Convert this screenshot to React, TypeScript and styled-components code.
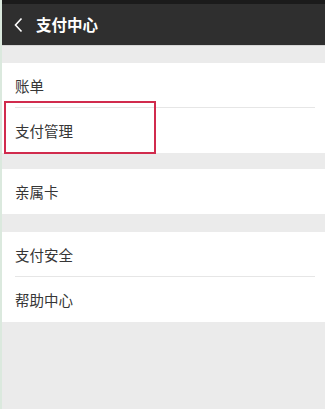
import React from "react";
import styled, { createGlobalStyle } from "styled-components";

const Global = createGlobalStyle`
  html, body { margin: 0; padding: 0; background: #ebebeb; }
  body { font-family: "Noto Sans CJK SC", "Noto Sans", sans-serif; }
`;

const Page = styled.div`
  width: 325px;
  height: 409px;
  background: #ebebeb;
  border-left: 2px solid #dbe9de;
  box-sizing: border-box;
  overflow: hidden;
  display: flex;
  flex-direction: column;
`;

const StatusStrip = styled.div`
  height: 4px;
  background: #1b1b1b;
  margin-left: -2px;
`;

const Header = styled.div`
  height: 42px;
  background: #2f2f2f;
  margin-left: -2px;
  display: flex;
  align-items: center;
  padding-left: 13px;
  gap: 12px;
  border-bottom: 1px solid #d6d6d6;
  box-sizing: border-box;
`;

const Title = styled.div`
  color: #ffffff;
  font-size: 15.5px;
  font-weight: 700;
  line-height: 1;
`;

const Group = styled.div<{ $top: number }>`
  margin-top: ${(p) => p.$top}px;
  background: #ffffff;
  display: flex;
  flex-direction: column;
`;

const Row = styled.div<{ $h?: number }>`
  position: relative;
  height: ${(p) => p.$h ?? 44}px;
  display: flex;
  align-items: center;
  padding-left: 13px;
  font-size: 14.5px;
  color: #363636;
`;

const Divider = styled.div`
  height: 1px;
  background: #e6e6e6;
  margin: 0 10px 0 13px;
`;

const Highlight = styled.div`
  position: absolute;
  left: 2px;
  top: -7px;
  width: 152px;
  height: 53px;
  border: 2.5px solid #d12b4d;
  box-sizing: border-box;
  pointer-events: none;
`;

export default function App() {
  return (
    <>
      <Global />
      <Page>
        <StatusStrip />
        <Header>
          <svg width="11" height="16" viewBox="0 0 11 16">
            <path d="M8.5 1.5 L2.5 8 L8.5 14.5" fill="none" stroke="#ffffff" strokeWidth="1.6" />
          </svg>
          <Title>支付中心</Title>
        </Header>
        <Group $top={17}>
          <Row>账单</Row>
          <Divider />
          <Row $h={45}>
            支付管理
            <Highlight />
          </Row>
        </Group>
        <Group $top={16}>
          <Row $h={45}>亲属卡</Row>
        </Group>
        <Group $top={18}>
          <Row>支付安全</Row>
          <Divider />
          <Row $h={45}>帮助中心</Row>
        </Group>
      </Page>
    </>
  );
}
